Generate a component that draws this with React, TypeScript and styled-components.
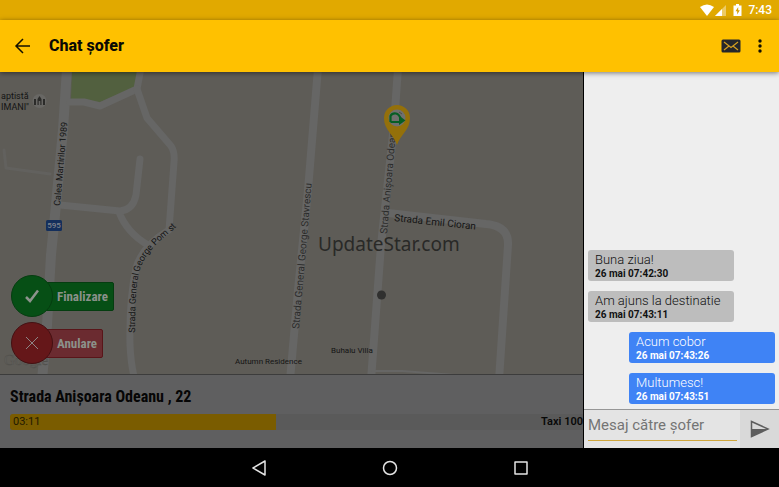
import React from "react";
import styled, { createGlobalStyle } from "styled-components";

const GlobalStyle = createGlobalStyle`
  *, *::before, *::after { box-sizing: border-box; }
  body { margin: 0; background: #000; font-family: Roboto, "Noto Sans", sans-serif; }
  button, input { font: inherit; border: 0; padding: 0; margin: 0; background: none; }
  button { cursor: pointer; display: flex; align-items: center; }
  svg { display: block; }
`;

const condensed = `"Roboto Condensed", Roboto, sans-serif`;

const Screen = styled.div`
  display: flex;
  flex-direction: column;
  min-height: 100vh;
`;

const StatusBar = styled.div`
  display: flex;
  align-items: center;
  justify-content: flex-end;
  height: 20px;
  padding-right: 7px;
  background: #e1a900;
  color: #fff;
`;

const Clock = styled.time`
  margin-left: 4px;
  font-size: 12px;
  font-weight: 500;
  line-height: 20px;
`;

const AppBar = styled.header`
  position: relative;
  z-index: 1;
  display: flex;
  align-items: center;
  height: 52px;
  padding: 0 12px 0 13px;
  background: #ffc100;
  box-shadow: 0 1px 5px rgba(0, 0, 0, 0.5);
`;

const Title = styled.h1`
  flex: 1;
  margin: 0 0 0 16px;
  font-size: 16px;
  font-weight: 800;
  line-height: 24px;
  color: #0a0a05;
`;

const BarActions = styled.div`
  display: flex;
  align-items: center;
  gap: 12px;
`;

const Main = styled.main`
  display: flex;
  flex: 1;
`;

const RideColumn = styled.section`
  display: flex;
  flex: 1;
  flex-direction: column;
  min-width: 0;
  overflow: hidden;
`;

const MapArea = styled.div`
  position: relative;
  display: flex;
  flex: 1;
  flex-direction: column;
  justify-content: flex-end;
  overflow: hidden;
  background: #5e5c57;
`;

const MapDrawing = styled.svg`
  position: absolute;
  inset: 0;
  width: 100%;
  height: 100%;
`;

const RideActions = styled.div`
  position: relative;
  display: flex;
  flex-direction: column;
  align-items: flex-start;
  gap: 5px;
  padding: 0 0 10px 11px;
`;

const RideButton = styled.button`
  white-space: nowrap;
`;

const Disc = styled.span<{ $color: string; $edge: string }>`
  position: relative;
  display: grid;
  place-items: center;
  width: 42px;
  height: 42px;
  border: 1px solid ${(p) => p.$edge};
  border-radius: 50%;
  background: ${(p) => p.$color};
`;

const ActionLabel = styled.span<{ $color: string; $edge: string }>`
  height: 29px;
  margin-left: -8px;
  padding: 0 5px 0 11px;
  border: 1px solid ${(p) => p.$edge};
  border-radius: 0 2px 2px 0;
  background: ${(p) => p.$color};
  color: #8b918a;
  font-family: ${condensed};
  font-size: 13px;
  font-weight: 700;
  line-height: 28px;
`;

const TripPanel = styled.div`
  height: 74px;
  padding: 10px 0 0 10px;
  border-top: 1px solid #3c3c3c;
  background: #5f5f60;
`;

const Address = styled.h2`
  margin: 0 0 5px;
  color: #060606;
  font-family: ${condensed};
  font-size: 16px;
  font-weight: 700;
  line-height: 24px;
  white-space: nowrap;
`;

const Progress = styled.div`
  display: flex;
  justify-content: space-between;
  height: 16px;
  border-radius: 3px 0 0 3px;
  background: #5a5a5a;
  font-size: 11px;
  line-height: 16px;
  color: #080808;
`;

const Elapsed = styled.div`
  padding-left: 3px;
  border-radius: 3px 0 0 3px;
  background: #7a5c00;
  color: #221a00;
`;

const TaxiNumber = styled.strong`
  flex: none;
  font-weight: 600;
`;

const Chat = styled.aside`
  display: flex;
  flex: 0 0 25%;
  flex-direction: column;
  min-width: 196px;
  border-left: 1px solid #000;
  background: #eee;
`;

const Messages = styled.ul`
  display: flex;
  flex: 1;
  flex-direction: column;
  justify-content: flex-end;
  gap: 10px;
  margin: 0;
  padding: 5px 4px;
  list-style: none;
`;

const Message = styled.li<{ $mine?: boolean }>`
  align-self: ${(p) => (p.$mine ? "flex-end" : "flex-start")};
  width: 146px;
  height: 31px;
  padding: 1px 7px 0;
  border-radius: 3px;
  background: ${(p) => (p.$mine ? "#3f83f5" : "#bdbdbd")};
  color: ${(p) => (p.$mine ? "#fff" : "#111")};
`;

const MessageText = styled.p`
  margin: 0;
  font-size: 13px;
  font-weight: 300;
  line-height: 17px;
  white-space: nowrap;
`;

const MessageTime = styled.time`
  display: block;
  font-size: 10px;
  font-weight: 700;
  line-height: 12px;
`;

const Composer = styled.form`
  display: flex;
  height: 39px;
  border-top: 1px solid #969696;
  background: #e4e4e4;
`;

const Field = styled.input`
  flex: 1;
  min-width: 0;
  height: 31px;
  margin: 0 3px 0 4px;
  border-bottom: 1px solid #cfa63c;
  border-radius: 0;
  color: #333;
  font-size: 15px;
  outline: none;
  &::placeholder { color: #747474; opacity: 1; }
`;

const SendButton = styled.button`
  justify-content: center;
  width: 39px;
  background: #d9d9d9;
`;

const NavBar = styled.nav`
  display: flex;
  justify-content: center;
  gap: 107px;
  height: 39px;
  background: #000;
`;

const IconButton = styled.button`
  justify-content: center;
`;

const road = "#666665";

function RideMap() {
  return (
    <MapDrawing viewBox="0 72 583 302" preserveAspectRatio="xMinYMin slice" role="img" aria-label="Map">
      <path d="M72 72 L71 99 L100 102 L134 88 L138 72Z" fill="#52603f" />
      <g fill="none" stroke={road} strokeLinejoin="round" strokeLinecap="round">
        <path d="M4 150 L6 168 L50 174" strokeWidth="3" stroke="#62615e" />
        <path d="M67 68 L63 130 L55 215 L51 255 L47 325 L42 380" strokeWidth="10" />
        <path d="M70 102 L84 102 L100 106 L137 89 L141 68" strokeWidth="7" />
        <path d="M137 89 L147 118 L171 146 Q175 152 174 162 L169 230 Q142 246 136 268 Q129 300 130 345 Q131 366 135 380" strokeWidth="7" />
        <path d="M140 159 L136 195 Q133 210 120 211 L60 205 M119 212 Q127 233 148 245" strokeWidth="7" />
        <path d="M318 68 L308 190 L298 290 L290 380" strokeWidth="8" />
        <path d="M398 68 L394 125 L381 245 L371 380" strokeWidth="8" />
        <path d="M388 213 L486 224 Q509 226 508 245 L499 380" strokeWidth="8" />
        <path d="M372 371 L402 371 L455 375" strokeWidth="2" />
      </g>
      <g fontSize="10" fill="#141414">
        <text x="1" y="99" fontSize="9">aptistă</text>
        <text x="1" y="110" fontSize="9">IMANI"</text>
        <text transform="translate(60 206) rotate(-85)" fontSize="9">Calea Martirilor 1989</text>
        <path id="pomst" d="M135 333 Q135 288 139 273 Q143 253 173 230 L182 221" fill="none" />
        <text fontSize="9"><textPath href="#pomst">Strada General George Pom st</textPath></text>
        <text transform="translate(299 329) rotate(-85)" fill="#2b2b2a">Strada General George Stavrescu</text>
        <text transform="translate(387 234) rotate(-85)" fill="#2b2b2a">Strada Anișoara Odeanu</text>
        <text transform="translate(394 221) rotate(6)">Strada Emil Cioran</text>
        <text x="235" y="364" fontSize="8">Autumn Residence</text>
        <text x="331" y="353" fontSize="8">Buhaiu Villa</text>
      </g>
      <circle cx="39.500" cy="101" r="7" fill="#686764" />
      <path d="M34 105 V99 H36 V105Z M37.500 105 V99 L39.500 96 L41.500 99 V105 H40.300 V101 H38.700 V105Z M43 105 V99 H45 V105Z" fill="#2b2b29" />
      <rect x="46" y="220" width="16" height="11" rx="1.500" fill="#142f5c" />
      <text x="54" y="228" textAnchor="middle" fontSize="8" fontWeight="500" fill="#80858c">595</text>
      <text x="4" y="365" fontSize="15" fontFamily="Liberation Serif, serif" fill="#62605c" stroke="#504f4b" strokeWidth="0.400">Google</text>
      <circle cx="381.500" cy="295" r="4.500" fill="#30302f" />
      <path d="M397 145 C394 135 384 130 384 118 A13 13 0 0 1 410 118 C410 130 400 135 397 145Z" fill="#94700a" />
      <circle cx="397" cy="118" r="8.500" fill="#70706e" />
      <path d="M390.500 122 V116 Q392 113 396 113.500 Q399 114 400.500 118.500 M390.500 122 H400" fill="none" stroke="#075e24" strokeWidth="2.200" />
      <path d="M399 115.500 L405.500 120.500 L399 125Z" fill="#075e24" />
      <path d="M399 112 L402 114" stroke="#4c4c4a" strokeWidth="1" />
      <text x="318" y="251" fontSize="19" fontFamily="Noto Sans, sans-serif" fill="#292927">UpdateStar.com</text>
    </MapDrawing>
  );
}

const messages = [
  { text: "Buna ziua!", time: "26 mai 07:42:30", mine: false },
  { text: "Am ajuns la destinatie", time: "26 mai 07:43:11", mine: false },
  { text: "Acum cobor", time: "26 mai 07:43:26", mine: true },
  { text: "Multumesc!", time: "26 mai 07:43:51", mine: true },
];

const progress = 46.4;

export default function App() {
  return (
    <Screen>
      <GlobalStyle />
      <StatusBar>
        <svg width="44" height="14" viewBox="0 0 44 14" fill="#fff">
          <path d="M0 4 Q7 -1 14 4 L7 13Z" />
          <path d="M26 2 V13 H15Z" opacity="0.400" />
          <path d="M22 6 V13 H15Z" />
          <path d="M36 1 H39 V2.500 H41.500 V13 H33.500 V2.500 H36Z" />
          <path d="M38.200 4 L35.500 8.200 H37.200 V11.500 L39.800 7.200 H38.200Z" fill="#d79f00" />
        </svg>
        <Clock>7:43</Clock>
      </StatusBar>
      <AppBar>
        <IconButton aria-label="Back">
          <svg width="20" height="20" viewBox="0 0 20 20" fill="none" stroke="#141000" strokeWidth="1.500">
            <path d="M17 10 H3 M10 3 L3 10 L10 17" />
          </svg>
        </IconButton>
        <Title>Chat șofer</Title>
        <BarActions>
          <IconButton aria-label="Messages">
            <svg width="20" height="14" viewBox="0 0 20 14">
              <rect x="0.500" y="0.500" width="19" height="13" rx="1.500" fill="#25272b" />
              <path d="M3 3 L10 8.500 L17 3 M3 11 L8 7 M17 11 L12 7" fill="none" stroke="#d6a020" strokeWidth="1.200" />
            </svg>
          </IconButton>
          <IconButton aria-label="More options">
            <svg width="14" height="14" viewBox="0 0 14 14" fill="#141000">
              <circle cx="7" cy="2" r="1.700" />
              <circle cx="7" cy="7" r="1.700" />
              <circle cx="7" cy="12" r="1.700" />
            </svg>
          </IconButton>
        </BarActions>
      </AppBar>
      <Main>
        <RideColumn>
          <MapArea>
            <RideMap />
            <RideActions>
              <RideButton>
                <Disc $color="#064f15" $edge="#053d10">
                  <svg width="16" height="16" viewBox="0 0 16 16" fill="none" stroke="#8d938d" strokeWidth="2.500">
                    <path d="M2 9 L6 13 L14 2.500" />
                  </svg>
                </Disc>
                <ActionLabel $color="#064f15" $edge="#053d10">Finalizare</ActionLabel>
              </RideButton>
              <RideButton>
                <Disc $color="#651719" $edge="#441012">
                  <svg width="16" height="16" viewBox="0 0 16 16" fill="none" stroke="#8d8585" strokeWidth="1">
                    <path d="M2 2 L14 14 M14 2 L2 14" />
                  </svg>
                </Disc>
                <ActionLabel $color="#6b2b30" $edge="#591519">Anulare</ActionLabel>
              </RideButton>
            </RideActions>
          </MapArea>
          <TripPanel>
            <Address>Strada Anișoara Odeanu , 22</Address>
            <Progress>
              <Elapsed style={{ width: `${progress}%` }}>03:11</Elapsed>
              <TaxiNumber>Taxi 100</TaxiNumber>
            </Progress>
          </TripPanel>
        </RideColumn>
        <Chat>
          <Messages>
            {messages.map((m) => (
              <Message key={m.time} $mine={m.mine}>
                <MessageText>{m.text}</MessageText>
                <MessageTime>{m.time}</MessageTime>
              </Message>
            ))}
          </Messages>
          <Composer onSubmit={(e) => e.preventDefault()}>
            <Field aria-label="Mesaj către șofer" placeholder="Mesaj către șofer" />
            <SendButton type="submit" aria-label="Send">
              <svg width="20" height="18" viewBox="0 0 20 18">
                <path d="M1.500 1.500 L18 9 L1.500 16.500 V9Z" fill="none" stroke="#5d5d5d" strokeWidth="1.500" />
                <path d="M1.500 9 H18 L1.500 16.500Z" fill="#5d5d5d" />
              </svg>
            </SendButton>
          </Composer>
        </Chat>
      </Main>
      <NavBar>
        <IconButton aria-label="Back">
          <svg width="24" height="24" viewBox="0 0 24 24" fill="none" stroke="#e4e4e4" strokeWidth="1.500" strokeLinejoin="round">
            <path d="M18 5 V19 L6 12Z" />
          </svg>
        </IconButton>
        <IconButton aria-label="Home">
          <svg width="24" height="24" viewBox="0 0 24 24" fill="none" stroke="#e4e4e4" strokeWidth="1.500">
            <circle cx="12" cy="12" r="6.500" />
          </svg>
        </IconButton>
        <IconButton aria-label="Recent apps">
          <svg width="24" height="24" viewBox="0 0 24 24" fill="none" stroke="#e4e4e4" strokeWidth="1.500" strokeLinejoin="round">
            <rect x="6" y="6" width="12" height="12" />
          </svg>
        </IconButton>
      </NavBar>
    </Screen>
  );
}
